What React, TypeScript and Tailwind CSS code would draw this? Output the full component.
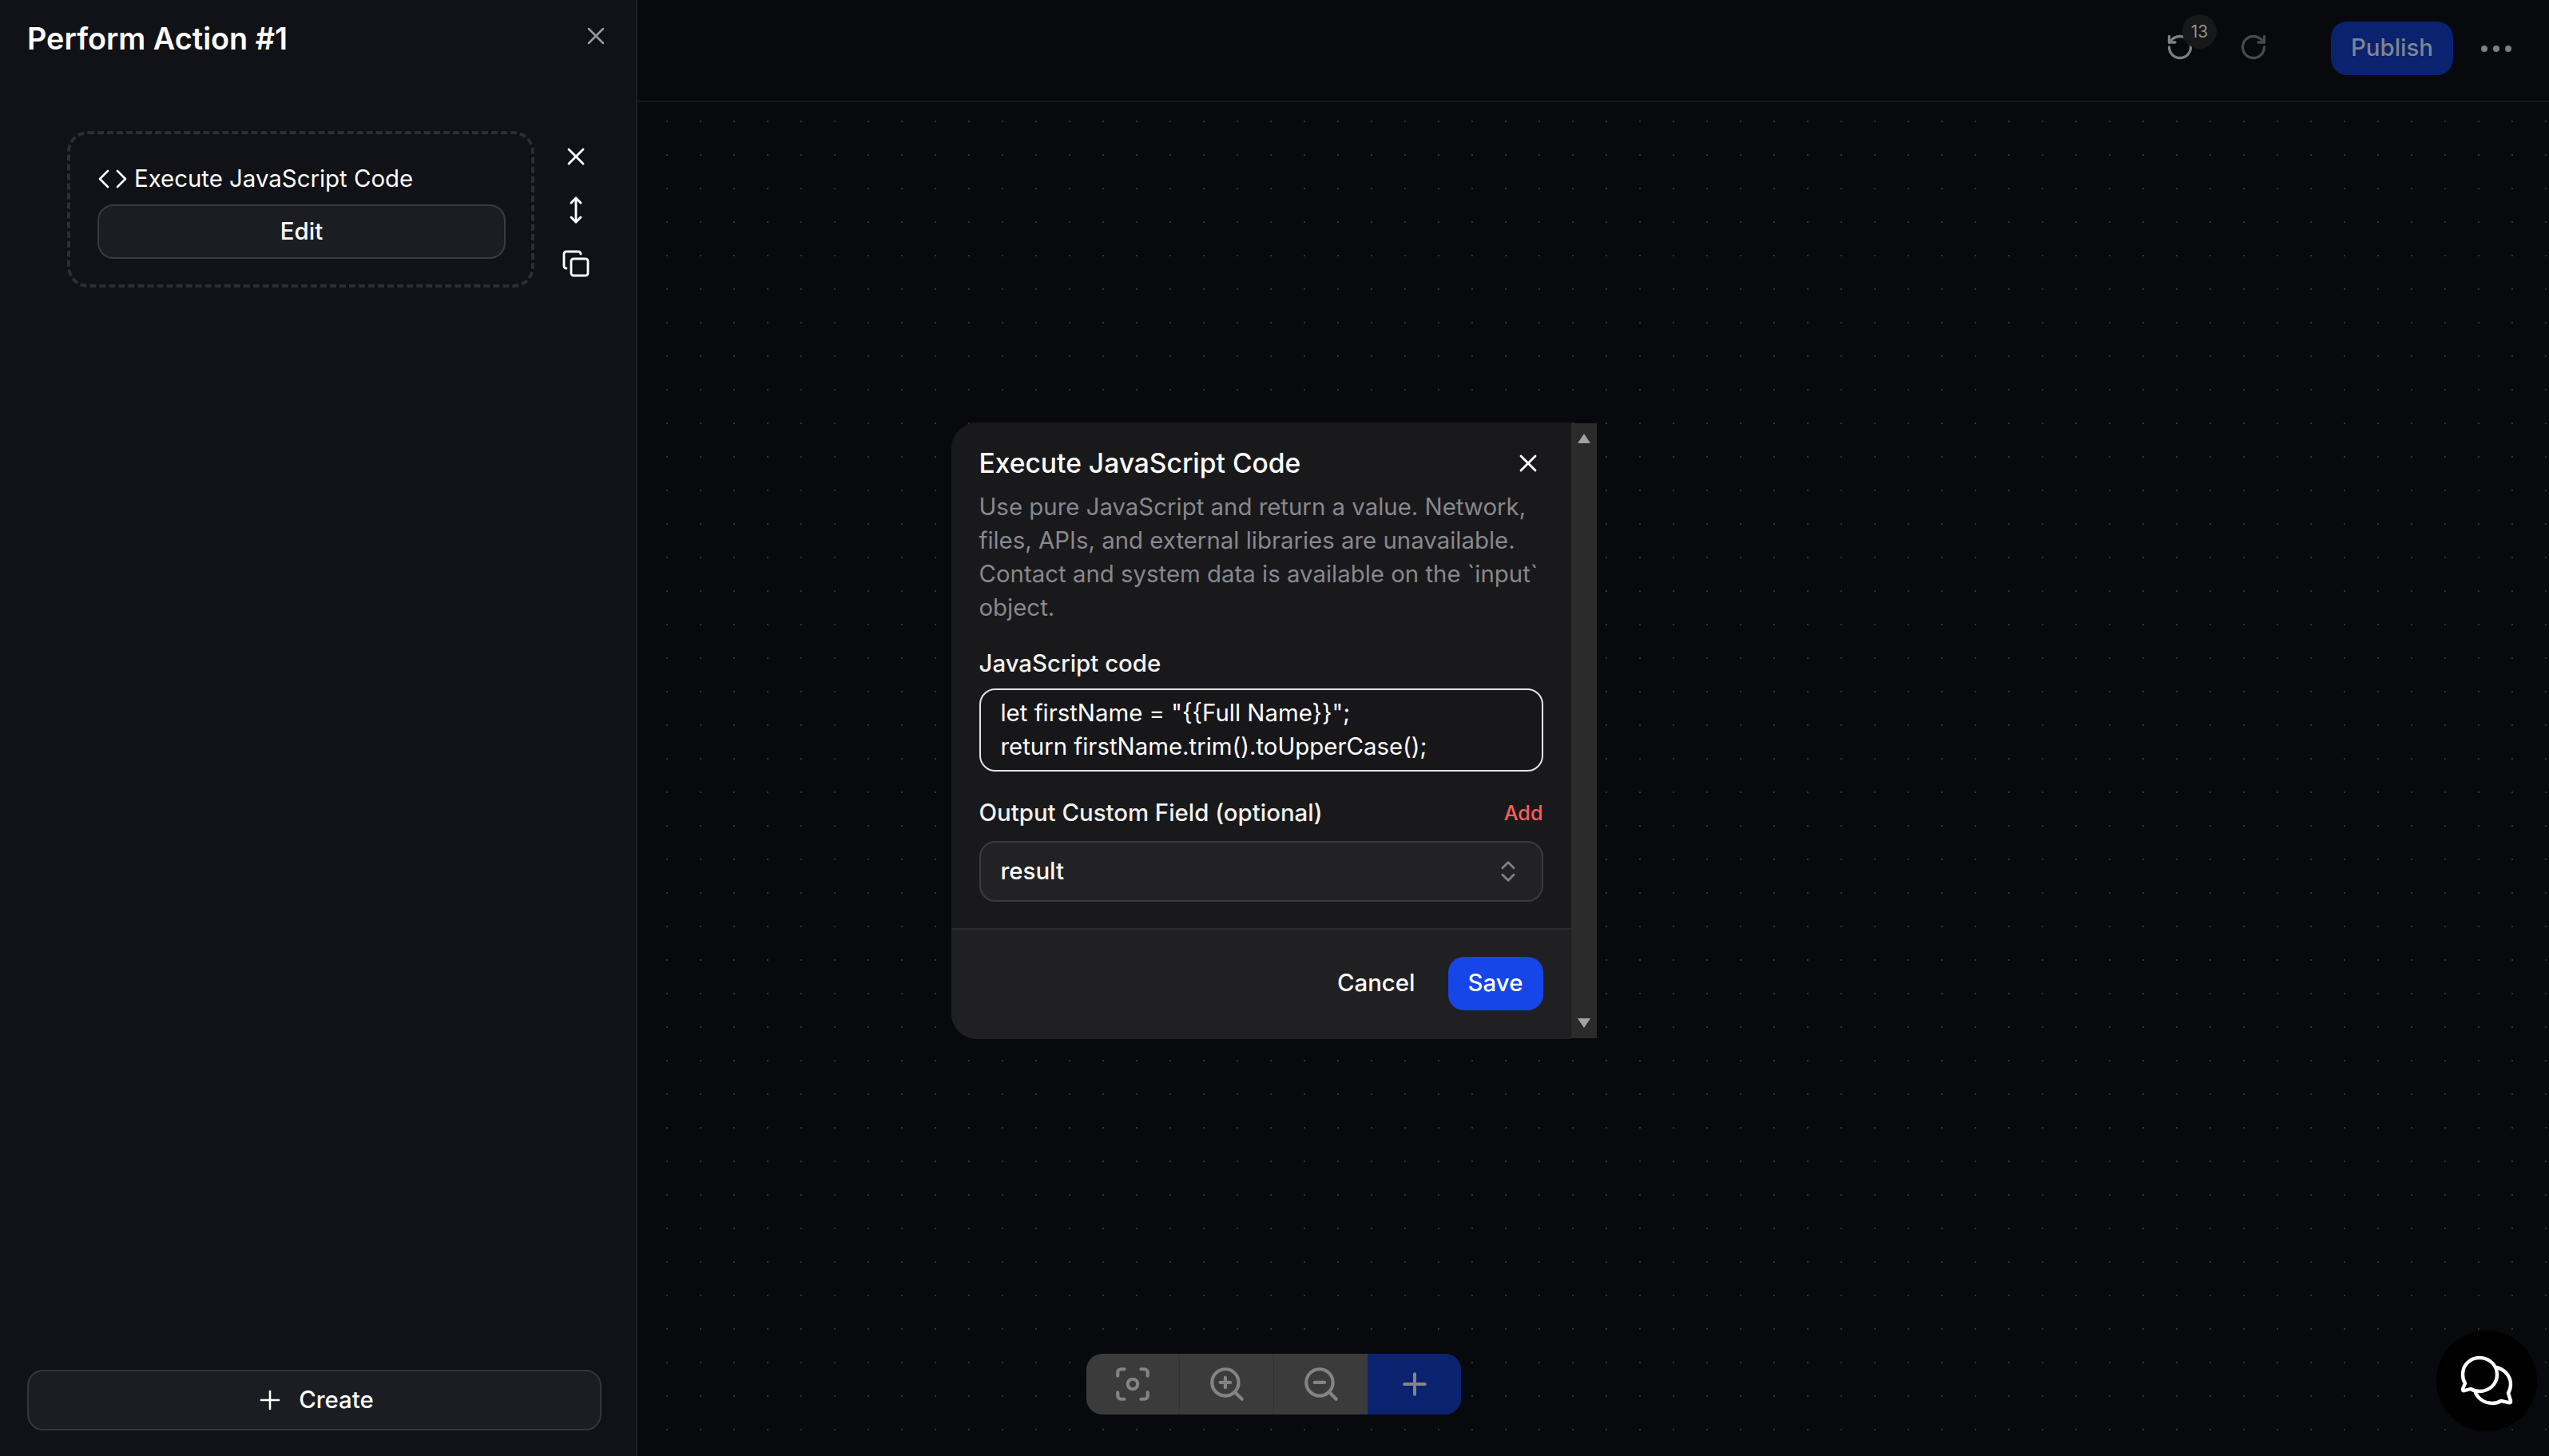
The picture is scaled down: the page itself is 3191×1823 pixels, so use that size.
import { ChevronsUpDown, Copy, Focus, MoveVertical, Plus, RotateCcw, RotateCw, X, ZoomIn, ZoomOut } from "lucide-react";

function CodeGlyph() {
  return (
    <svg className="ml-[1px]" width="36" height="24" viewBox="0 0 36 24" fill="none" stroke="currentColor" strokeWidth="2.6" strokeLinecap="round" strokeLinejoin="round">
      <path d="M12 2 2 12l10 10" />
      <path d="M24 2l10 10-10 10" />
    </svg>
  );
}

function ChatGlyph() {
  return (
    <svg width="68" height="64" viewBox="0 0 68 64" fill="none" stroke="currentColor" strokeWidth="4.4" strokeLinecap="round" strokeLinejoin="round">
      <path d="M25 3C13 3 4 12 4 24c0 4 1 8 3 11l-3 7c-.6 1.500.4 2.500 2 2.200l8-2.200c3 1.800 7 3 11 3 12 0 22-9 22-21S37 3 25 3Z" />
      <path d="M46 15c10 2 18 11 18 21 0 4-1 8-3 11l3 10c.4 1.600-.6 2.600-2.200 2.200L52 57c-3 1.800-7 3-11 3-9 0-17-5-21-13" />
    </svg>
  );
}

function Sidebar() {
  return (
    <aside className="flex h-[1823px] w-[798px] shrink-0 flex-col border-r-2 border-[#1e1f24] bg-[#111217] px-[34px] pt-[24px] pb-[32px]">
      <div className="flex items-center justify-between">
        <h1 className="text-[37.8px] leading-[48px] font-semibold text-white">Perform Action #1</h1>
        <X className="mt-[-7px] mr-[-2px] text-[#9a9a9d]" size={36} strokeWidth={1.7} />
      </div>

      <div className="mt-[92px] ml-[50px] flex items-start gap-[33px]">
        <div className="h-[196px] w-[585px] rounded-[26px] border-[4px] border-dashed border-[#2d2e33] px-[34px] pt-[36px]">
          <div className="flex h-[40px] items-center gap-[9px] text-[29.4px] text-white">
            <CodeGlyph />
            <span>Execute JavaScript Code</span>
          </div>
          <button className="mt-[12px] h-[68px] w-[511px] rounded-[20px] border-[2px] border-[#3a3b40] bg-[#1c1d22] text-[29.4px] font-medium text-white">
            Edit
          </button>
        </div>
        <div className="mt-[14px] flex w-[38px] flex-col items-center gap-[31px] text-white">
          <X size={36} strokeWidth={1.9} />
          <MoveVertical size={36} strokeWidth={1.9} />
          <Copy size={36} strokeWidth={1.9} />
        </div>
      </div>

      <button className="mt-auto flex h-[76px] w-[719px] items-center justify-center gap-[17px] rounded-[20px] border-[2px] border-[#35363b] bg-[#1c1d22] text-[29.4px] font-medium text-white">
        <Plus size={38} strokeWidth={1.6} />
        Create
      </button>
    </aside>
  );
}

function TopBar() {
  return (
    <header className="flex h-[128px] items-start justify-end border-b-2 border-[#14161a] bg-[#07090d]">
      <div className="relative mt-[41px] mr-[352px] flex gap-[56px]">
        <RotateCcw className="text-[#7e7e7e]" size={36} strokeWidth={2.2} />
        <RotateCw className="text-[#4a4a4a]" size={36} strokeWidth={2.2} />
        <span className="absolute top-[-23px] left-[21px] flex h-[43px] w-[43px] items-center justify-center rounded-full bg-[#17181a] text-[21px] text-[#8f8f8f]">
          13
        </span>
      </div>
    </header>
  );
}

function Modal() {
  return (
    <div className="absolute inset-0 flex items-start justify-center pt-[529px]">
      <div className="flex h-[772px] w-[810px] items-stretch">
        <div className="flex w-[776px] flex-col overflow-hidden rounded-l-[32px] bg-[#19191b]">
          <div className="flex-1 px-[35px] pt-[30px]">
            <div className="flex h-[42px] items-center justify-between">
              <h2 className="text-[33.6px] leading-[42px] font-medium text-white">Execute JavaScript Code</h2>
              <X className="mr-[1px] text-white" size={36} strokeWidth={1.9} />
            </div>
            <p className="mt-[13px] text-[29.4px] leading-[42px] text-[#88888e]">
              Use pure JavaScript and return a value. Network, files, APIs, and external libraries are unavailable. Contact and system data is available on the `input` object.
            </p>
            <label className="mt-[28px] block text-[29.4px] leading-[42px] font-medium text-[#f2f2f2]">JavaScript code</label>
            <div className="mt-[10px] h-[104px] rounded-[20px] border-[2px] border-[#e4e4e4] bg-[#17171a] px-[25px] py-[8px] text-[29.4px] leading-[42px] text-white">
              <div>let firstName = "{"{{"}Full Name{"}}"}";</div>
              <div>return firstName.trim().toUpperCase();</div>
            </div>
            <div className="mt-[31px] flex h-[42px] items-center justify-between">
              <label className="text-[29.4px] font-medium text-[#f2f2f2]">Output Custom Field (optional)</label>
              <span className="mt-[1px] text-[25.2px] font-medium text-[#ff5c5c]">Add</span>
            </div>
            <div className="mt-[14px] flex h-[76px] items-center justify-between rounded-[20px] border-[2px] border-[#3c3c3f] bg-[#222224] pr-[25px] pl-[25px] text-[29.4px] font-medium text-white">
              result
              <ChevronsUpDown className="text-[#808080]" size={34} strokeWidth={2} />
            </div>
          </div>
          <div className="flex h-[139px] items-start justify-end gap-[41px] border-t-2 border-[#2a2a2c] bg-[#202022] pt-[34px] pr-[35px]">
            <button className="h-[67px] text-[29.4px] font-medium text-white">Cancel</button>
            <button className="h-[67px] w-[119px] rounded-[20px] bg-[#1645e8] text-[29.4px] font-medium text-white">Save</button>
          </div>
        </div>
        <div className="my-[1px] flex w-[32px] flex-col items-center justify-between bg-[#2b2b2b] py-[13px]">
          <svg width="16" height="12" viewBox="0 0 16 12" fill="#a3a3a3"><path d="M8 0 16 12H0Z" /></svg>
          <svg width="16" height="12" viewBox="0 0 16 12" fill="#a3a3a3"><path d="M8 12 0 0H16Z" /></svg>
        </div>
      </div>
    </div>
  );
}

function Toolbar() {
  return (
    <div className="absolute bottom-[52px] left-[1360px] flex h-[76px] w-[469px] overflow-hidden rounded-[20px] bg-[#3b3b3b] text-[#848484]">
      <div className="flex w-[117px] items-center justify-center border-r border-[#333333]"><Focus size={50} strokeWidth={2} /></div>
      <div className="flex w-[118px] items-center justify-center border-r border-[#333333]"><ZoomIn size={50} strokeWidth={2} /></div>
      <div className="flex w-[117px] items-center justify-center"><ZoomOut size={50} strokeWidth={2} /></div>
      <div className="flex flex-1 items-center justify-center bg-[#0a2270]"><Plus size={44} strokeWidth={2.2} /></div>
    </div>
  );
}

export default function App() {
  return (
    <div className="relative flex h-[1823px] w-[3191px] overflow-hidden bg-[#07090d] font-['Inter',sans-serif]">
      <Sidebar />
      <main className="flex flex-1 flex-col">
        <TopBar />
        <div className="flex-1 bg-[#07090d] bg-[radial-gradient(circle,#33343a_1.1px,transparent_1.5px)] bg-[size:42px_42px] bg-[position:16px_3px]" />
      </main>

      <div className="absolute top-[27px] right-[47px] flex items-center gap-[35px]">
        <button className="h-[67px] w-[153px] rounded-[20px] bg-[#0a2270] text-[29.4px] font-medium text-[#7e8592]">Publish</button>
        <div className="flex gap-[7px]">
          <span className="h-[8px] w-[8px] rounded-full bg-[#808080]" />
          <span className="h-[8px] w-[8px] rounded-full bg-[#808080]" />
          <span className="h-[8px] w-[8px] rounded-full bg-[#808080]" />
        </div>
      </div>

      <Modal />
      <Toolbar />

      <div className="absolute right-[15px] bottom-[31px] flex h-[126px] w-[126px] items-center justify-center rounded-full bg-black text-white">
        <ChatGlyph />
      </div>
    </div>
  );
}
